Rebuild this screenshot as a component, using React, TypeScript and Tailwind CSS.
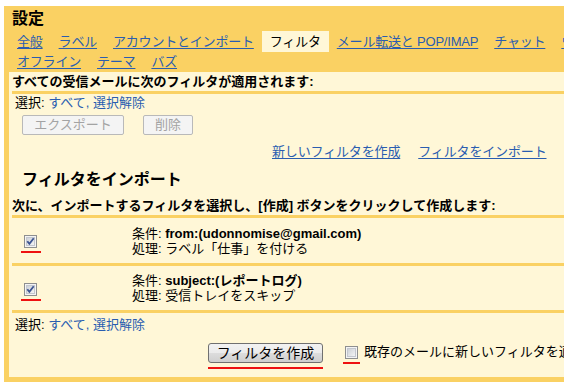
import React from 'react';

const link = 'text-[#2a5db0] underline underline-offset-[2px]';

function Box(props: { checked?: boolean }) {
    return (
        <svg width="13" height="13" viewBox="0 0 13 13" className="block">
            <defs>
                <linearGradient id="cbFill" x1="0" y1="0" x2="1" y2="1">
                    <stop offset="0" stopColor="#cbcfd5" />
                    <stop offset="1" stopColor="#f6f6f6" />
                </linearGradient>
            </defs>
            <rect x="0.5" y="0.5" width="12" height="12" fill="#f4f4f4" stroke="#8e8f8f" />
            <rect x="2.5" y="2.5" width="8" height="8" fill="url(#cbFill)" stroke="#c3c7cf" />
            {props.checked && (
                <path d="M3.3 6.2 L5.4 8.9 L9.7 3.3" fill="none" stroke="#3c5491" strokeWidth="1.8" />
            )}
        </svg>
    );
}

function Mark(props: { w: string }) {
    return <div className={`h-[2px] bg-[#ee1111] ${props.w}`} />;
}

function Line() {
    return <div className="h-[3px] ml-[3px] bg-[#fad163]" />;
}

function FilterRow(props: { h: string; cond: string; action: string }) {
    return (
        <div className={`flex ${props.h}`}>
            <div className="w-[123px] shrink-0 pl-[12px] pt-[17px]">
                <div className="flex flex-col items-start">
                    <div className="ml-[3px]">
                        <Box checked />
                    </div>
                    <div className="mt-[3px]">
                        <Mark w="w-[20px]" />
                    </div>
                </div>
            </div>
            <div className="flex flex-col justify-center leading-[15px]">
                <div>
                    条件: <b>{props.cond}</b>
                </div>
                <div>処理: {props.action}</div>
            </div>
        </div>
    );
}

function Pick() {
    return (
        <div className="pl-[6px] leading-[15px]">
            選択: <span className="text-[#2a5db0]">すべて, 選択解除</span>
        </div>
    );
}

export default function App() {
    const tabs1 = ['全般', 'ラベル', 'アカウントとインポート', 'フィルタ', 'メール転送と POP/IMAP', 'チャット', 'ウェブ クリップ'];
    const tabs2 = ['オフライン', 'テーマ', 'バズ'];

    return (
        <div className="w-[564px] h-[388px] overflow-hidden bg-white text-[13px] text-black font-['Liberation_Sans','Noto_Sans_CJK_JP',sans-serif]">
            <div className="ml-[4px] mt-[6px] w-[620px] bg-[#fad163] pl-[5px] pb-[5px]">
                <div className="h-[25px] pl-[3px] pt-[4px] text-[16px] leading-[18px] font-bold">設定</div>

                <div className="flex h-[21px] whitespace-nowrap tracking-[-0.2px]">
                    {tabs1.map(t =>
                        t === 'フィルタ' ? (
                            <div key={t} className="px-2 bg-[#fff7d7] leading-[21px]">{t}</div>
                        ) : (
                            <div key={t} className="px-2 leading-[21px]">
                                <span className={link}>{t}</span>
                            </div>
                        )
                    )}
                </div>
                <div className="flex h-[20px] whitespace-nowrap tracking-[-0.2px]">
                    {tabs2.map(t => (
                        <div key={t} className="px-2 leading-[19px]">
                            <span className={link}>{t}</span>
                        </div>
                    ))}
                </div>

                <div className="bg-[#fff7d7] h-[305px]">
                    <div className="h-[19px] pl-[3px] leading-[19px] font-bold">
                        すべての受信メールに次のフィルタが適用されます:
                    </div>
                    <Line />
                    <div className="pt-[1px] h-[16px]">
                        <Pick />
                    </div>

                    <div className="flex gap-[19px] pl-[13px] mt-[5px]">
                        <div className="h-[20px] w-[102px] rounded-[2px] border border-[#b9b9b9] bg-[#f4f4f4] text-[#a3a3a3] flex items-center justify-center">
                            エクスポート
                        </div>
                        <div className="h-[20px] w-[50px] rounded-[2px] border border-[#b9b9b9] bg-[#f4f4f4] text-[#a3a3a3] flex items-center justify-center">
                            削除
                        </div>
                    </div>

                    <div className="flex gap-[18px] pl-[263px] mt-[9px] leading-[15px] tracking-[-0.15px]">
                        <span className={link}>新しいフィルタを作成</span>
                        <span className={link}>フィルタをインポート</span>
                    </div>

                    <div className="mt-[11px] pl-[13px] text-[16px] leading-[20px] font-bold">フィルタをインポート</div>

                    <div className="mt-[8px] pl-[3px] leading-[15px] font-bold whitespace-nowrap">
                        次に、インポートするフィルタを選択し、[作成] ボタンをクリックして作成します:
                    </div>
                    <div className="mt-[2px]">
                        <Line />
                    </div>

                    <FilterRow h="h-[45px]" cond="from:(udonnomise@gmail.com)" action="ラベル「仕事」を付ける" />
                    <Line />
                    <FilterRow h="h-[44px]" cond="subject:(レポートログ)" action="受信トレイをスキップ" />
                    <Line />

                    <div className="pt-[4px]">
                        <Pick />
                    </div>

                    <div className="flex items-start pl-[199px] mt-[11px] whitespace-nowrap">
                        <div className="flex flex-col">
                            <div className="h-[20px] w-[115px] rounded-[3px] border border-[#707070] bg-[linear-gradient(#f2f2f2_0%,#ebebeb_50%,#dddddd_50%,#cfcfcf_100%)] flex items-center justify-center text-[14px]">
                                フィルタを作成
                            </div>
                            <div className="mt-[4px]">
                                <Mark w="w-[115px]" />
                            </div>
                        </div>
                        <div className="ml-[20px] mt-[3px] flex flex-col">
                            <div className="ml-[2px]">
                                <Box />
                            </div>
                            <div className="mt-[3px]">
                                <Mark w="w-[17px]" />
                            </div>
                        </div>
                        <div className="ml-[4px] mt-[1px] leading-[15px]">既存のメールに新しいフィルタを適用する</div>
                    </div>
                </div>
            </div>
        </div>
    );
}
